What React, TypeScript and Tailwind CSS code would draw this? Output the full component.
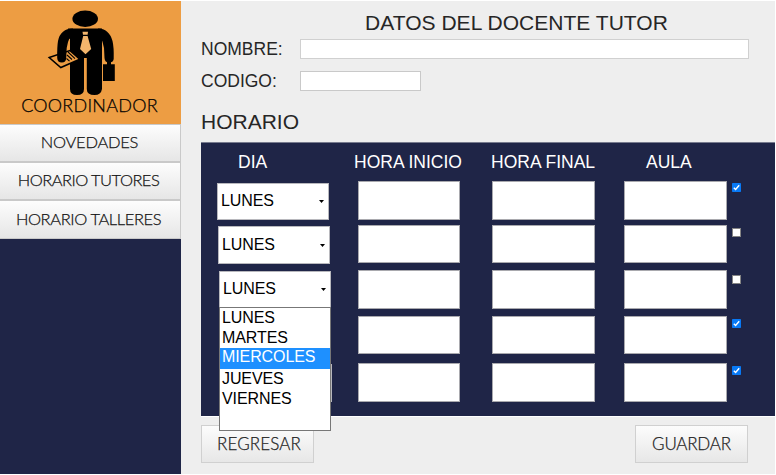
import React from "react";

const days = ["LUNES", "MARTES", "MIERCOLES", "JUEVES", "VIERNES"];

type Row = { value: string; checked: boolean; select: string; input: string; check: string };

const rows: Row[] = [
  { value: "LUNES", checked: true, select: "mt-[2px] h-[37px] ml-0", input: "h-[39px]", check: "mt-[2px]" },
  { value: "LUNES", checked: false, select: "mt-[1px] h-[38px] ml-[1px]", input: "h-[38px]", check: "mt-[3px]" },
  { value: "LUNES", checked: false, select: "mt-[1px] h-[37px] ml-[2px]", input: "h-[39px]", check: "mt-[5px]" },
  { value: "", checked: true, select: "mt-[1px] h-[37px] ml-[2px]", input: "h-[38px]", check: "mt-[3px]" },
  { value: "", checked: true, select: "mt-[1px] h-[38px] ml-[3px]", input: "h-[39px]", check: "mt-[3px]" },
];

const gothic = "font-['Lato','Liberation_Sans',sans-serif] font-light [-webkit-text-stroke:0.25px]";

function Coordinator() {
  return (
    <svg viewBox="0 0 85 95" className="h-[95px] w-[85px]" aria-hidden="true">
      <ellipse cx="45.2" cy="13.8" rx="12.8" ry="8.2" />
      <path d="M28 23.5H62V84Q61 90 54.5 90Q46.8 90 46.8 84V53H44V84Q44 90 37 90Q30 90 30 84V34L28 33Z" />
      <path d="M58 23.5Q69 23.5 72.5 36Q74 42 73.7 54Q73.3 57.5 69 57.5Q64.8 57.5 64.5 53L64 43Q63 37 60.6 32Z" />
      <path d="M42.5 26.8H48L47.6 29.8H43Z M43.2 31H47.6L51.2 44L45.5 49.3L40 44Z" fill="#f3b56c" />
      <path d="M9.2 52.5L29.8 45.5L39.7 54.3L20.8 62.5Z" fill="#ed9d43" stroke="#000" strokeWidth="1.5" />
      <path d="M28 47L35 53.6M27 50L32 54.5M26.5 53.5L29.5 56.2" fill="none" stroke="#000" strokeWidth="1.1" />
      <path d="M33 23.5Q20.5 23.5 18 36Q17 42 17.2 53Q17.5 57.5 21.8 57.5Q26 57.5 26.2 53L26.7 43Q27.5 37 30 32Z" />
      <path d="M67 57H71V59.2H74.8V76H63V59.2H67Z" />
    </svg>
  );
}

function Tick({ on }: { on: boolean }) {
  return on ? (
    <svg viewBox="0 0 9 9" className="block h-[9px] w-[9px]">
      <rect width="9" height="9" rx=".7" fill="#0879f5" />
      <path d="M1.8 4.8L3.6 6.5L7.2 2.3" fill="none" stroke="#fff" strokeWidth="1.4" />
    </svg>
  ) : (
    <span className="block h-[9px] w-[9px] border border-[#858585] bg-white" />
  );
}

function DaySelect({ row, open }: { row: Row; open: boolean }) {
  return (
    <div
      className={`relative flex w-[112px] items-center justify-between border border-[#b8b8bd] bg-white pr-[4px] pl-[3px] text-[16px] leading-none tracking-[-0.1px] text-black ${row.select}`}
    >
      <span className="-mt-[1px]">{row.value}</span>
      <svg viewBox="0 0 5 3" className="h-[3px] w-[5px]">
        <path d="M0 0H5L2.5 3Z" />
      </svg>
      {open && (
        <ul className="absolute top-[35px] -left-px z-10 h-[124px] w-[112px] border border-[#777] bg-white">
          {days.map((day) => (
            <li
              key={day}
              className={
                day === "MIERCOLES"
                  ? "flex h-[21px] items-center bg-[#1e90ff] pb-[3px] pl-[2px] text-white"
                  : "flex h-[20px] items-center pb-[1px] pl-[2px]"
              }
            >
              {day}
            </li>
          ))}
        </ul>
      )}
    </div>
  );
}

function Heading({ children, className }: { children: React.ReactNode; className: string }) {
  return <span className={`whitespace-nowrap ${className}`}>{children}</span>;
}

export default function App() {
  const field = "border border-[#a9a9ae] bg-white";
  const nav =
    "flex items-center justify-center whitespace-nowrap border border-l-0 border-[#c9c9c9] bg-linear-to-b from-[#fdfdfd] to-[#e6e6e6] text-[16.5px] leading-none text-[#151515]";
  const action =
    "flex h-[38px] items-center justify-center border border-[#d0d0d0] bg-linear-to-b from-[#fcfcfc] to-[#e7e7e7] text-[17px] leading-none text-[#222]";
  return (
    <div className="flex h-[475px] w-[776px] overflow-hidden bg-white pt-px pb-px font-['Liberation_Sans',Arial,sans-serif]">
      <aside className="flex w-[181px] shrink-0 flex-col bg-[#1f2547]">
        <div className="flex h-[123px] flex-col items-center bg-[#ed9d43]">
          <div className="mt-[4px] mr-[16px] h-[92px]">
            <Coordinator />
          </div>
          <span className={`${gothic} -mt-[2px] mr-[2px] text-[18px] leading-[20px] tracking-[0.25px] text-black`}>
            COORDINADOR
          </span>
        </div>
        <nav className={`flex flex-col ${gothic}`}>
          <a className={`${nav} h-[38px] pr-[1px] pb-[1px] tracking-[-0.25px]`}>NOVEDADES</a>
          <a className={`${nav} h-[38px] pr-[3px] pb-[2px] tracking-[-0.55px]`}>HORARIO TUTORES</a>
          <a className={`${nav} h-[39px] pr-[3px] pb-[1px] tracking-[-0.4px]`}>HORARIO TALLERES</a>
        </nav>
      </aside>

      <main className="flex w-[594px] flex-col bg-[#eee] pl-[20px] text-[#262626]">
        <h1 className="mt-[11px] ml-[164px] text-[21px] leading-[22px] tracking-[0.03px] whitespace-nowrap">
          DATOS DEL DOCENTE TUTOR
        </h1>
        <div className="mt-[5px] flex h-[20px] items-center text-[17.5px] leading-none">
          <label className="w-[99px] pt-[2px]">NOMBRE:</label>
          <div className="h-[20px] w-[449px] border border-[#d0d0d0] bg-white" />
        </div>
        <div className="mt-[12px] flex h-[20px] items-center text-[17.5px] leading-none">
          <label className="w-[99px] pt-[2px]">CODIGO:</label>
          <div className="h-[20px] w-[121px] border border-[#c9c9c9] bg-white" />
        </div>
        <h2 className="mt-[19px] text-[21px] leading-[24px]">HORARIO</h2>

        <section className="mt-[8px] h-[275px] border-t border-b border-t-[#777b8e] border-b-white bg-[#1f2547]">
          <div className="flex h-[38px] items-center pt-[2px] text-[17.5px] leading-none text-white">
            <Heading className="w-[116px] pl-[37px]">DIA</Heading>
            <Heading className="ml-[37px] w-[137px]">HORA INICIO</Heading>
            <Heading className="w-[155px]">HORA FINAL</Heading>
            <Heading className="">AULA</Heading>
          </div>
          <div className="ml-[16px] grid grid-cols-[141px_134px_132px_108px_9px] grid-rows-[44px_45px_46px_47px_39px] items-start">
            {rows.map((row, i) => (
              <React.Fragment key={i}>
                <DaySelect row={row} open={i === 2} />
                <div className={`${field} w-[102px] ${row.input}`} />
                <div className={`${field} w-[103px] ${row.input}`} />
                <div className={`${field} w-[103px] ${row.input}`} />
                <div className={row.check}>
                  <Tick on={row.checked} />
                </div>
              </React.Fragment>
            ))}
          </div>
        </section>

        <div className={`mt-[8px] flex justify-between pr-[27px] ${gothic}`}>
          <button className={`${action} w-[113px] pb-[1px] tracking-[0.1px]`}>
            <span className="pl-[3px]">REGRESAR</span>
          </button>
          <button className={`${action} w-[113px] pb-[1px] tracking-[-0.2px]`}>GUARDAR</button>
        </div>
      </main>
    </div>
  );
}
